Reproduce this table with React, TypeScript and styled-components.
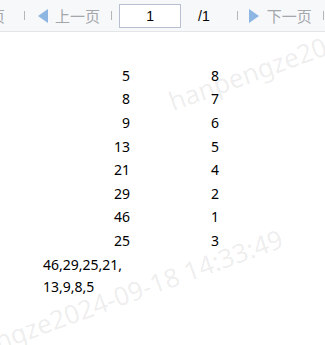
import * as React from 'react';
import styled, { createGlobalStyle } from 'styled-components';

const GlobalStyle = createGlobalStyle`
	html, body {
		margin: 0;
		padding: 0;
		background: #ffffff;
	}
	body {
		font-family: "Noto Sans", "Noto Sans CJK SC", sans-serif;
		overflow: hidden;
	}
`;

const Page = styled.div`
	position: relative;
	width: 325px;
	height: 345px;
	overflow: hidden;
`;

const Toolbar = styled.div`
	display: flex;
	align-items: center;
	height: 31px;
	background: #f7f8fa;
	border-bottom: 1px solid #e3e5e9;
	overflow: hidden;
	white-space: nowrap;
`;

const Item = styled.div<{ $ml: number }>`
	display: flex;
	align-items: center;
	flex: none;
	margin-left: ${(p) => p.$ml}px;
`;

const NavText = styled.span`
	font-family: "Noto Sans CJK SC", sans-serif;
	font-size: 15px;
	line-height: 1;
	color: #a3a6ab;
`;

const Separator = styled.span`
	display: block;
	width: 1px;
	height: 9px;
	background: #b4b7bc;
`;

const Triangle = styled.span<{ $dir: 'left' | 'right' }>`
	display: block;
	width: 0;
	height: 0;
	border-top: 7px solid transparent;
	border-bottom: 7px solid transparent;
	${(p) => (p.$dir === 'left' ? 'border-right: 10px solid #8db6e2;' : 'border-left: 10px solid #8db6e2;')}
`;

const PageInput = styled.div`
	box-sizing: border-box;
	width: 62px;
	height: 24px;
	border: 1px solid #b8bfd1;
	background: #ffffff;
	display: flex;
	align-items: center;
	justify-content: center;
	font-family: "Liberation Sans", sans-serif;
	font-size: 14px;
	color: #000000;
`;

const PageTotal = styled.span`
	font-family: "Liberation Sans", sans-serif;
	font-size: 14px;
	color: #000000;
`;

const Content = styled.div`
	padding: 32px 0 0 43px;
	font-size: 14px;
	color: #000000;
`;

const Table = styled.div`
	display: grid;
	grid-template-columns: 87px 1fr;
	column-gap: 81px;
`;

const Cell = styled.div<{ $align: 'left' | 'right' }>`
	line-height: 22px;
	padding: 0.8px 0;
	text-align: ${(p) => p.$align};
`;

const Summary = styled.div`
	width: 90px;
	margin-top: 1px;
	line-height: 22px;
`;

const Watermark = styled.span`
	position: absolute;
	font-size: 26px;
	line-height: 1;
	color: rgba(0, 0, 0, 0.085);
	white-space: nowrap;
	transform-origin: 0 100%;
	transform: rotate(-20deg);
	pointer-events: none;
`;

const rows: [number, number][] = [
	[5, 8],
	[8, 7],
	[9, 6],
	[13, 5],
	[21, 4],
	[29, 2],
	[46, 1],
	[25, 3],
];

const watermarkText = 'hanpengze2024-09-18 14:33:49';

export default function App() {
	return (
		<Page>
			<GlobalStyle />
			<Toolbar>
				<Item $ml={-10}><NavText>页</NavText></Item>
				<Item $ml={19}><Separator /></Item>
				<Item $ml={13}><Triangle $dir="left" /></Item>
				<Item $ml={7}><NavText>上一页</NavText></Item>
				<Item $ml={11}><Separator /></Item>
				<Item $ml={7}><PageInput>1</PageInput></Item>
				<Item $ml={17}><PageTotal>/1</PageTotal></Item>
				<Item $ml={27}><Separator /></Item>
				<Item $ml={11}><Triangle $dir="right" /></Item>
				<Item $ml={8}><NavText>下一页</NavText></Item>
				<Item $ml={11}><Separator /></Item>
			</Toolbar>
			<Content>
				<Table>
					{rows.map(([a, b], i) => (
						<React.Fragment key={i}>
							<Cell $align="right">{a}</Cell>
							<Cell $align="left">{b}</Cell>
						</React.Fragment>
					))}
				</Table>
				<Summary>
					46,29,25,21,<wbr />13,9,8,5
				</Summary>
			</Content>
			<Watermark style={{ left: 174, top: 88 }}>{watermarkText}</Watermark>
			<Watermark style={{ left: -73, top: 354 }}>{watermarkText}</Watermark>
		</Page>
	);
}
